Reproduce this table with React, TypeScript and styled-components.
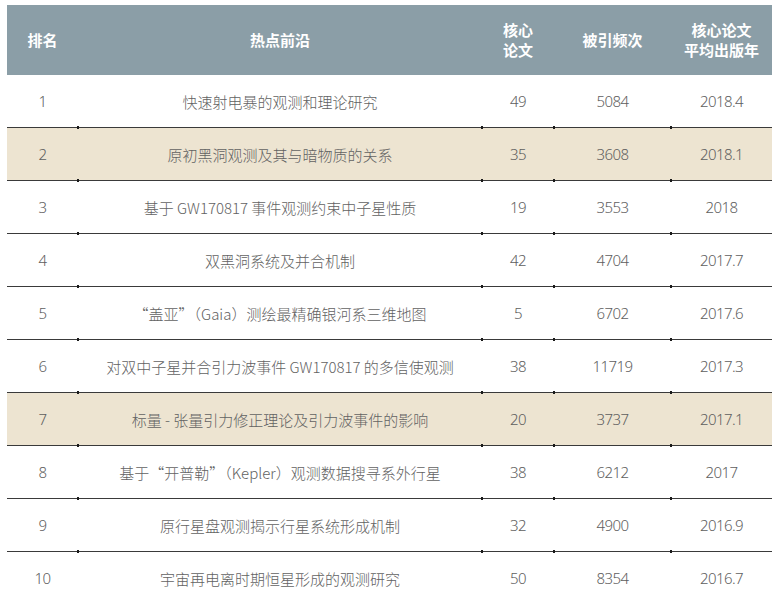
import * as React from "react";
import styled, { createGlobalStyle } from "styled-components";

type Row = {
  rank: number;
  topic: string;
  core: number;
  cites: number;
  year: string;
  shaded?: boolean;
};

const rows: Row[] = [
  { rank: 1, topic: "快速射电暴的观测和理论研究", core: 49, cites: 5084, year: "2018.4" },
  { rank: 2, topic: "原初黑洞观测及其与暗物质的关系", core: 35, cites: 3608, year: "2018.1", shaded: true },
  { rank: 3, topic: "基于 GW170817 事件观测约束中子星性质", core: 19, cites: 3553, year: "2018" },
  { rank: 4, topic: "双黑洞系统及并合机制", core: 42, cites: 4704, year: "2017.7" },
  { rank: 5, topic: "“盖亚”（Gaia）测绘最精确银河系三维地图", core: 5, cites: 6702, year: "2017.6" },
  { rank: 6, topic: "对双中子星并合引力波事件 GW170817 的多信使观测", core: 38, cites: 11719, year: "2017.3" },
  { rank: 7, topic: "标量 - 张量引力修正理论及引力波事件的影响", core: 20, cites: 3737, year: "2017.1", shaded: true },
  { rank: 8, topic: "基于“开普勒”（Kepler）观测数据搜寻系外行星", core: 38, cites: 6212, year: "2017" },
  { rank: 9, topic: "原行星盘观测揭示行星系统形成机制", core: 32, cites: 4900, year: "2016.9" },
  { rank: 10, topic: "宇宙再电离时期恒星形成的观测研究", core: 50, cites: 8354, year: "2016.7" },
];

const GlobalStyle = createGlobalStyle`
  html, body {
    margin: 0;
    padding: 0;
    background: #ffffff;
  }
  body {
    font-family: "Noto Sans CJK SC", sans-serif;
  }
`;

const columns = "71px 404px 72px 117px 101px";

const Table = styled.div`
  margin: 5px 0 0 7px;
  width: 765px;
`;

const HeaderRow = styled.div`
  display: grid;
  grid-template-columns: ${columns};
  height: 70px;
  background: #8b9ea7;
  color: #ffffff;
  font-weight: 700;
  font-size: 15px;
  line-height: 20px;
`;

const HeadCell = styled.div`
  display: flex;
  align-items: center;
  justify-content: center;
  text-align: center;
`;

const BodyRow = styled.div<{ $shaded?: boolean; $last?: boolean }>`
  display: grid;
  grid-template-columns: ${columns};
  height: 52px;
  background: ${(p) => (p.$shaded ? "#ede4d1" : "#ffffff")};
  border-bottom: 1.5px solid ${(p) => (p.$last ? "#e6e6e6" : "#3a3a3a")};
  color: #626262;
  font-size: 15px;
  font-weight: 300;
`;

const Cell = styled.div<{ $tick?: boolean }>`
  position: relative;
  display: flex;
  align-items: center;
  justify-content: center;
  white-space: nowrap;

  &::after {
    content: "";
    display: ${(p) => (p.$tick ? "block" : "none")};
    position: absolute;
    left: -1px;
    bottom: -2px;
    width: 2px;
    height: 3px;
    background: #1a1a1a;
  }
`;

const Num = styled.span`
  display: inline-block;
  font-family: "Noto Sans", "Liberation Sans", sans-serif;
  font-weight: 300;
  font-size: 15px;
  letter-spacing: -0.6px;
  color: #5e5e5e;
`;

export default function App() {
  return (
    <>
      <GlobalStyle />
      <Table>
        <HeaderRow>
          <HeadCell>排名</HeadCell>
          <HeadCell>热点前沿</HeadCell>
          <HeadCell>
            核心
            <br />
            论文
          </HeadCell>
          <HeadCell>被引频次</HeadCell>
          <HeadCell>
            核心论文
            <br />
            平均出版年
          </HeadCell>
        </HeaderRow>
        {rows.map((r, i) => {
          const last = i === rows.length - 1;
          return (
            <BodyRow key={r.rank} $shaded={r.shaded} $last={last}>
              <Cell>
                <Num>{r.rank}</Num>
              </Cell>
              <Cell $tick={!last}>{r.topic}</Cell>
              <Cell $tick={!last}>
                <Num>{r.core}</Num>
              </Cell>
              <Cell $tick={!last}>
                <Num>{r.cites}</Num>
              </Cell>
              <Cell $tick={!last}>
                <Num>{r.year}</Num>
              </Cell>
            </BodyRow>
          );
        })}
      </Table>
    </>
  );
}
